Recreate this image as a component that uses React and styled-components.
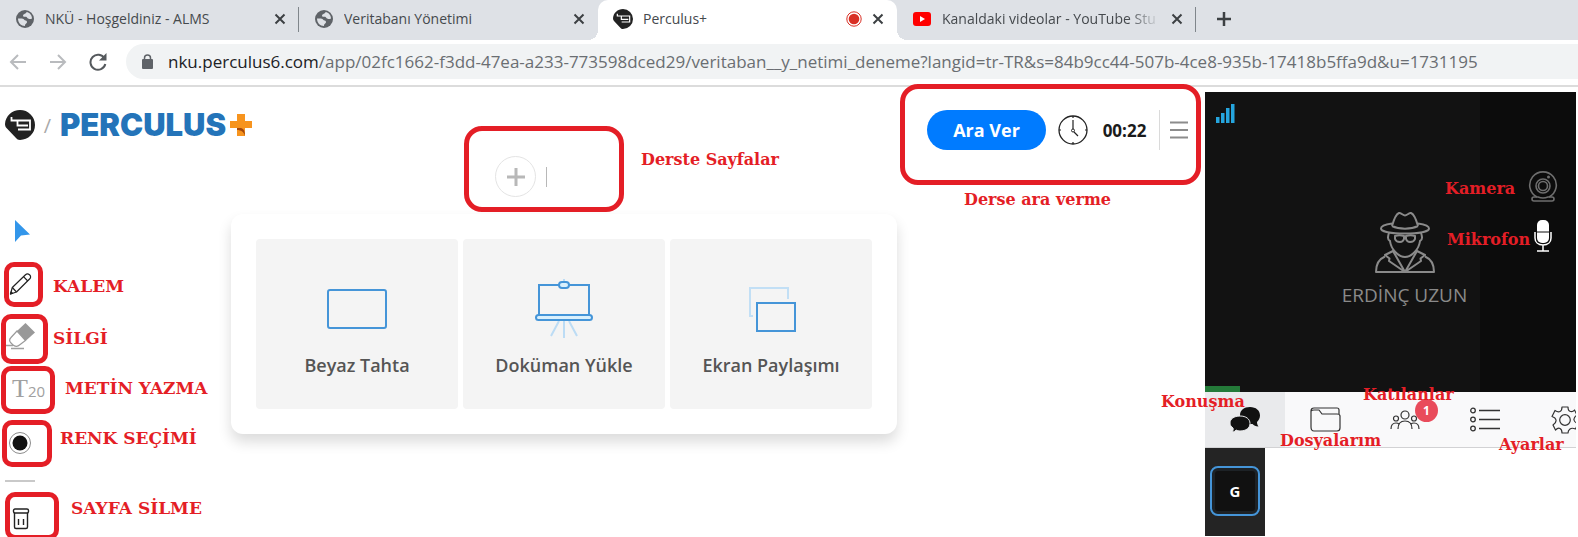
import React from "react";
import styled, { createGlobalStyle, css } from "styled-components";

const UI = `"Open Sans", "Noto Sans", sans-serif`;
const NOTE = `"DejaVu Serif", serif`;
const RED = "#e41e26";

const GlobalStyle = createGlobalStyle`
  * { box-sizing: border-box; }
  body { margin: 0; background: #fff; font-family: ${UI}; }
  button { margin: 0; padding: 0; border: 0; background: none; font: inherit; color: inherit; cursor: pointer; }
  svg { display: block; flex: none; }
`;

const Page = styled.div`
  display: flex;
  flex-direction: column;
  min-height: 100vh;
  overflow: hidden;
`;

/* Browser chrome */
const TabStrip = styled.div`
  display: flex;
  height: 40px;
  background: #dee1e6;
`;

const BrowserTab = styled.div`
  position: relative;
  flex: 0 1 299px;
  min-width: 0;
  display: flex;
  align-items: center;
  gap: 11px;
  padding: 0 13px 2px 16px;
  color: #45494d;
  font-size: 14px;
  ${(p) => p.$divider && css`
    &::after {
      content: "";
      position: absolute;
      right: 0;
      top: 7px;
      width: 1px;
      height: 25px;
      background: #80868b;
    }
  `}
  ${(p) => p.$active && css`
    padding-left: 15px;
    gap: 10px;
    background: #fff;
    border-radius: 10px 10px 0 0;
    &::before, &::after {
      content: "";
      position: absolute;
      bottom: 0;
      width: 10px;
      height: 10px;
    }
    &::before { left: -10px; background: radial-gradient(circle at 0 0, transparent 10px, #fff 10px); }
    &::after { right: -10px; background: radial-gradient(circle at 100% 0, transparent 10px, #fff 10px); }
  `}
`;

const TabTitle = styled.span`
  flex: 1;
  min-width: 0;
  overflow: hidden;
  white-space: nowrap;
  line-height: 24px;
  ${(p) => p.$fade && css`mask-image: linear-gradient(to left, transparent, #000 32px);`}
`;

const NewTab = styled.button`
  display: grid;
  place-items: center;
  width: 56px;
  padding-bottom: 2px;
`;

const AddressRow = styled.div`
  display: flex;
  align-items: center;
  height: 47px;
  padding: 0 0 2px 6px;
  border-bottom: 2px solid #dcdcdc;
`;

const NavButton = styled.button`
  flex: none;
  display: grid;
  place-items: center;
  width: 24px;
  height: 24px;
  margin-right: 16px;
  color: ${(p) => (p.$off ? "#b9bbbe" : "#55595d")};
`;

const AddressBar = styled.div`
  flex: 1;
  min-width: 0;
  display: flex;
  align-items: center;
  gap: 14px;
  height: 35px;
  padding-left: 15px;
  border-radius: 18px 0 0 18px;
  background: #f1f3f4;
  color: #6a6e72;
  font-size: 17px;
  white-space: nowrap;
  overflow: hidden;
  b { font-weight: 400; color: #202124; }
`;

/* Classroom */
const Classroom = styled.div`
  flex: 1;
  display: flex;
`;

const Main = styled.main`
  flex: 1;
  min-width: 0;
  display: grid;
  grid-template-columns: 231px minmax(0, 1fr) 308px;
  grid-template-rows: 127px auto;
`;

const Brand = styled.a`
  display: flex;
  align-items: center;
  align-self: start;
  height: 30px;
  margin-top: 23px;
  padding-left: 5px;
  text-decoration: none;
  white-space: nowrap;
`;

const Slash = styled.span`
  flex: none;
  width: 25px;
  text-align: center;
  color: #a9a9a9;
  font-size: 20px;
`;

const Wordmark = styled.span`
  flex: none;
  color: #2474b9;
  font-family: Inter, sans-serif;
  font-size: 31px;
  font-weight: 900;
  line-height: 30px;
  margin-right: 4px;
`;

const PageStrip = styled.div`
  position: relative;
  align-self: end;
  display: flex;
  align-items: center;
  gap: 10px;
  padding: 0 0 17px calc(50% - 69px);
`;

const AddPage = styled.button`
  display: grid;
  place-items: center;
  width: 41px;
  height: 41px;
  border: 1px solid #e4e4e4;
  border-radius: 50%;
`;

const Rule = styled.span`
  width: 1px;
  height: ${(p) => p.$length}px;
  background: ${(p) => p.$tone};
`;

const Controls = styled.div`
  position: relative;
  align-self: start;
  justify-self: end;
  display: flex;
  align-items: center;
  height: 40px;
  margin-top: 23px;
  padding-right: 17px;
`;

const BreakButton = styled.button`
  width: 119px;
  height: 40px;
  border-radius: 20px;
  background: #007bff;
  color: #fff;
  font-size: 18px;
  font-weight: 700;
  margin-right: 12px;
`;

const Elapsed = styled.time`
  width: 71px;
  padding-left: 2px;
  text-align: center;
  font-size: 17px;
  font-weight: 700;
  color: #1b1b1b;
`;

const MenuButton = styled.button`
  margin-left: 10px;
`;

const Rail = styled.div`
  display: flex;
  flex-direction: column;
  align-items: flex-start;
  gap: 21px;
  padding: 1px 0 2px 5px;
`;

const ToolSlot = styled.div`
  position: relative;
  height: 32px;
`;

const Tool = styled.button`
  display: flex;
  align-items: center;
  width: 40px;
  height: 32px;
`;

const RailRule = styled.div`
  width: 30px;
  height: 2px;
  background: #c9c9c9;
`;

const Starter = styled.section`
  align-self: start;
  display: grid;
  grid-template-columns: repeat(3, minmax(0, 1fr));
  gap: 5px;
  padding: 25px;
  border-radius: 12px;
  background: #fff;
  box-shadow: 0 8px 14px rgba(0, 0, 0, 0.14);
`;

const Choice = styled.button`
  display: flex;
  flex-direction: column;
  align-items: center;
  gap: 12px;
  padding: 40px 0 30px;
  border-radius: 4px;
  background: #f4f4f4;
  color: #555;
  font-size: 18px;
  font-weight: 600;
  line-height: 28px;
`;

/* Side panel */
const Side = styled.aside`
  position: relative;
  flex: none;
  width: 373px;
  padding: 5px 2px 0 0;
`;

const Camera = styled.div`
  position: relative;
  display: flex;
  flex-direction: column;
  align-items: center;
  height: 300px;
  padding: 120px 0 0 28px;
  background: linear-gradient(to left, #0c0c0c 96px, #121212 96px);
  color: #8a8a8a;
  font-size: 19px;
  line-height: 28px;
`;

const Speaker = styled.span`
  margin-top: 8px;
`;

const Signal = styled.div`
  position: absolute;
  left: 11px;
  top: 12px;
`;

const Level = styled.div`
  position: absolute;
  left: 0;
  bottom: 0;
  width: 35px;
  height: 6px;
  background: #247a39;
`;

const DeviceButtons = styled.div`
  position: absolute;
  right: 18px;
  top: 78px;
  display: flex;
  flex-direction: column;
  align-items: center;
  gap: 18px;
`;

const PanelTabs = styled.nav`
  display: flex;
  height: 56px;
  overflow: hidden;
  background: #f9f9fa;
  border-bottom: 1px solid #d2d2d4;
`;

const PanelTab = styled.button`
  position: relative;
  flex: none;
  display: grid;
  place-items: center;
  width: 80px;
  background: ${(p) => (p.$active ? "#e9eaec" : "none")};
`;

const Badge = styled.span`
  position: absolute;
  left: 50px;
  top: 7px;
  width: 23px;
  height: 23px;
  border-radius: 50%;
  background: #e94b5b;
  color: #fff;
  font-size: 12px;
  font-weight: 700;
  line-height: 23px;
`;

const People = styled.div`
  display: flex;
  justify-content: center;
  align-items: flex-start;
  width: 60px;
  height: 88px;
  padding-top: 18px;
  background: #242424;
`;

const Initial = styled.button`
  width: 50px;
  height: 50px;
  border: 2px solid #4595d8;
  border-radius: 8px;
  background: #111;
  box-shadow: inset 0 0 0 3px #1d2226;
  color: #fff;
  font-size: 15px;
  font-weight: 700;
`;

/* Red teaching notes laid over the interface */
const Frame = styled.span`
  position: absolute;
  z-index: 2;
  left: ${(p) => p.$x}px;
  top: ${(p) => p.$y}px;
  width: ${(p) => p.$w}px;
  height: ${(p) => p.$h}px;
  border: 5px solid ${RED};
  border-radius: ${(p) => p.$r || 10}px;
  pointer-events: none;
`;

const Note = styled.span`
  position: absolute;
  z-index: 3;
  left: ${(p) => p.$x}px;
  top: ${(p) => p.$y}px;
  color: ${RED};
  font-family: ${NOTE};
  font-size: ${(p) => (p.$caps ? 17 : 16)}px;
  font-weight: 700;
  line-height: ${(p) => (p.$caps ? 20 : 22)}px;
  white-space: nowrap;
  pointer-events: none;
`;

const StripMarks = styled.span`
  position: absolute;
  left: 50%;
  top: 0;
`;

/* Drawings */
const Globe = () => (
  <svg width="18" height="18" viewBox="0 0 18 18">
    <circle cx="9" cy="9" r="9" fill="#5f6368" />
    <path d="M2 8.500c2.500 0 5-.500 6 1s3 .500 3 2.500-2 1-2 4C5 16 2 13 2 8.500zM10.500 2c0 2-3.500 1.500-3.500 4 1 1.500 3 0 4 1.500s3 2 5 1C16 5 13.500 2.500 10.500 2z" fill="#dee1e6" />
  </svg>
);

const Close = () => (
  <svg width="12" height="12" viewBox="0 0 12 12" stroke="#3c4043" strokeWidth="2">
    <path d="M1.500 1.500l9 9M10.500 1.500l-9 9" />
  </svg>
);

const Mark = ({ size }) => (
  <svg width={size} height={size} viewBox="0 0 30 30">
    <path d="M15 0a15 15 0 0 1 0 30c-2 0-3-1-4-2L1.500 18C.500 17 0 15.500 0 14 .500 6 7 0 15 0z" fill="#222" />
    <path d="M6.500 7v3.500H25v9H13M12.500 11v4.500H23" fill="none" stroke="#fff" strokeWidth="1.800" />
  </svg>
);

const Recording = () => (
  <svg width="16" height="16" viewBox="0 0 16 16">
    <circle cx="8" cy="8" r="7.200" fill="none" stroke="#d93025" />
    <circle cx="8" cy="8" r="5.300" fill="#d93025" />
  </svg>
);

const Tube = () => (
  <svg width="18" height="14" viewBox="0 0 18 14">
    <rect width="18" height="14" rx="3" fill="#f00" />
    <path d="M7 4l5 3-5 3z" fill="#fff" />
  </svg>
);

const Arrow = ({ flip }) => (
  <svg width="18" height="18" viewBox="0 0 18 18" fill="none" stroke="currentColor" strokeWidth="2">
    <path d={flip ? "M1 9h15M9 2l7 7-7 7" : "M17 9H2M9 2L2 9l7 7"} />
  </svg>
);

const Reload = () => (
  <svg width="18" height="18" viewBox="0 0 18 18">
    <path d="M15.500 5.500A7.500 7.500 0 1 0 16.300 11" fill="none" stroke="currentColor" strokeWidth="2" />
    <path d="M17.500 0v7.500H10z" fill="currentColor" />
  </svg>
);

const Lock = () => (
  <svg width="13" height="16" viewBox="0 0 13 16">
    <rect x="1" y="5" width="11" height="10" rx="1" fill="#5f6368" />
    <path d="M3.500 6V4a3 3 0 0 1 6 0v2" fill="none" stroke="#5f6368" strokeWidth="1.500" />
  </svg>
);

const LogoPlus = () => (
  <svg width="22" height="22" viewBox="0 0 22 22">
    <path d="M7 0h8v7h7v7h-7v8H7v-8H0V7h7z" fill="#f7941e" />
    <path d="M7 14h3c3 0 5 2 5 8-1-4-4-6-8-6z" fill="#a4470b" />
  </svg>
);

const Clock = () => (
  <svg width="30" height="30" viewBox="0 0 30 30" fill="none" stroke="#222">
    <circle cx="15" cy="15" r="14" strokeWidth="1.300" />
    <circle cx="15" cy="15.500" r="1.500" />
    <path d="M15 5v9M16 17l4 4M15 1v2M15 27v2M1 15h2M27 15h2" strokeWidth="1.200" />
  </svg>
);

const Burger = () => (
  <svg width="18" height="18" viewBox="0 0 18 18" stroke="#8c8c8c" strokeWidth="2">
    <path d="M0 1.500h18M0 9h18M0 16.500h18" />
  </svg>
);

const Pointer = () => (
  <svg width="26" height="22" viewBox="0 0 26 22">
    <path d="M10 0l15 14.500-9 1L10 22z" fill="#3396ea" />
  </svg>
);

const Pencil = () => (
  <svg width="28" height="22" viewBox="0 0 28 22" fill="none" stroke="#222" strokeWidth="1.200" strokeLinejoin="round">
    <path d="M5.500 21l1.800-6.500L20.500 1.700c1.200-1 2.700-1 4 .100s1.500 2.700.300 4L11.500 19z" />
    <path d="M7.300 14.500l4.200 4.500M18.500 3.700l4.300 4.300" />
    <path d="M5.500 21l.600-2.200 1.500 1.500z" fill="#222" />
  </svg>
);

const Eraser = () => (
  <svg width="30" height="28" viewBox="0 0 30 28">
    <path d="M12 8L20.500 0l9.500 9.500-9.500 8.500z" fill="#999" />
    <path d="M12 8L6 14.500c-2 2-1.500 4 0 5.500l2 2c2 2 5 1.500 6.500 0l6-4.500z" fill="#fff" stroke="#999" strokeWidth="1.200" />
    <path d="M0 22.500h8M6 25.500h13" stroke="#a0a0a0" strokeWidth="1.300" />
  </svg>
);

const Swatch = () => (
  <svg width="26" height="24" viewBox="0 0 26 24">
    <circle cx="15" cy="12" r="10.500" fill="none" stroke="#8c8c8c" />
    <circle cx="15" cy="12" r="7.500" fill="#111" />
  </svg>
);

const Bin = () => (
  <svg width="25" height="22" viewBox="0 0 25 22" fill="none" stroke="#222" strokeWidth="1.400">
    <rect x="8.500" y="1" width="15" height="4" rx="1.500" />
    <path d="M9.500 5v14q0 1.500 1.500 1.500h10q1.500 0 1.500-1.500V5M13.500 11v6M18.500 11v6" />
  </svg>
);

const TextSize = styled.span`
  padding-left: 7px;
  color: #a0a0a0;
  font-family: "Liberation Serif", serif;
  font-size: 26px;
  line-height: 32px;
  small { font-family: ${UI}; font-size: 15px; }
`;

const Board = () => (
  <svg width="60" height="60" viewBox="0 0 60 60">
    <rect x="1" y="11" width="58" height="38" rx="2" fill="none" stroke="#4595d8" strokeWidth="2" />
  </svg>
);

const Easel = () => (
  <svg width="60" height="60" viewBox="0 0 60 60" fill="none" stroke="#4595d8" strokeWidth="2">
    <path d="M25 42l-8 15M30 42v17M35 42l8 15M30 0v3" stroke="#bcdcf5" />
    <rect x="5" y="6" width="50" height="31" />
    <rect x="2" y="36" width="56" height="5" rx="2.500" fill="#d9f0fd" />
    <rect x="25" y="3" width="10" height="6" rx="3" fill="#d9f0fd" />
  </svg>
);

const Screens = () => (
  <svg width="60" height="60" viewBox="0 0 60 60" fill="none" strokeWidth="2">
    <path d="M12 37H9V9h38v11" stroke="#c2dff5" />
    <rect x="16" y="24" width="38" height="28" stroke="#4595d8" />
  </svg>
);

const Bars = () => (
  <svg width="19" height="19" viewBox="0 0 19 19" fill="#25a5de">
    <path d="M0 13h3.500v6H0zM5 9h3.500v10H5zM10 4h3.500v15H10zM15 0h3.500v19H15z" />
  </svg>
);

const Agent = () => (
  <svg width="60" height="61" viewBox="0 0 60 61" fill="none" stroke="#8a8a8a" strokeWidth="2" strokeLinejoin="round">
    <path d="M17 14c2-7 4-12 7-13 2-.500 4 2.500 6 2.500S34 .500 36 1c3 1 5 6 7 13M17 14c7 3.500 19 3.500 26 0M17 11.500C10 12.500 6 14.500 6 16.500c0 3 10 5 24 5s24-2 24-5c0-2-4-4-11-5" />
    <path d="M14 21c-2 5-1 7 1 8 1 8 8 16 15 16s14-8 15-16c2-1 3-3 1-8" />
    <path d="M20 24q4.500-1.500 9 0v3q-1 3-4 3-4 0-5-3zM31 24q4.500-1.500 9 0v3q-1 3-5 3-3 0-4-3z" />
    <path d="M10 44.500C4 47 1 53 1 60h58c0-7-3-13-9-15.500" />
    <path d="M18 39l-8 4 4.500 3.500L14 49l16 11-12-21zM42 39l8 4-4.500 3.500.500 2.500-16 11z" />
  </svg>
);

const Webcam = () => (
  <svg width="30" height="32" viewBox="0 0 30 32" fill="none" stroke="#6e6e6e" strokeWidth="1.600">
    <path d="M9 27a13.300 13.300 0 1 1 12 0" />
    <circle cx="15" cy="16" r="7" />
    <circle cx="15" cy="16" r="4.500" />
    <circle cx="20.500" cy="7" r=".7" />
    <path d="M6 27h4q5 2 10 0h4q2 0 2 2t-2 2H6q-2 0-2-2t2-2z" />
  </svg>
);

const Microphone = () => (
  <svg width="18" height="32" viewBox="0 0 18 32">
    <rect x="3" y="0" width="12" height="23" rx="5" fill="#fff" />
    <path d="M3 12h12" stroke="#0c0c0c" />
    <path d="M1 12v6c0 4 3 7 8 7s8-3 8-7v-6M9 25v6M3 31h12" fill="none" stroke="#fff" strokeWidth="1.500" />
  </svg>
);

const Chat = () => (
  <svg width="31" height="26" viewBox="0 0 31 26">
    <path d="M20 0c6 0 10 3.500 10 8.500 0 3-1.500 5-3 6.500 0 2 .500 3 1.500 4.500-3 0-4.500-1-6-2.500C14 18 10 14 10 8.500S14 0 20 0z" fill="#111" />
    <path d="M10 9c6 0 10 3 10 7.500S16 24 10 24c-1.500 0-3-.500-4-1-1 1.500-2.500 2-4 2 1-1 1.500-2.500 1-4-2-1.500-3-3-3-5C0 12 4 9 10 9z" fill="#111" stroke="#e9eaec" />
  </svg>
);

const Folder = () => (
  <svg width="31" height="25" viewBox="0 0 31 25" fill="none" stroke="#333" strokeWidth="1.200">
    <path d="M1 20V4q0-3 3-3h23q2 0 2 2v4M1 4q1-1 3-1h5l3 4h15q3 0 3 2v12q0 3-3 3H4q-3 0-3-4z" />
  </svg>
);

const Group = () => (
  <svg width="30" height="20" viewBox="0 0 30 20" fill="none" stroke="#333" strokeWidth="1.200">
    <circle cx="15" cy="5" r="4" />
    <circle cx="6" cy="8.500" r="2.500" />
    <circle cx="24" cy="8.500" r="2.500" />
    <path d="M8 19c0-5 2-8 7-8s7 3 7 8M1 19c0-4 2-6 5-6 1 0 2 0 3 1M29 19c0-4-2-6-5-6-1 0-2 0-3 1" />
  </svg>
);

const List = () => (
  <svg width="30" height="25" viewBox="0 0 30 25" fill="none" stroke="#333" strokeWidth="1.300">
    <circle cx="3" cy="3.500" r="2.300" />
    <circle cx="3" cy="12.500" r="2.300" />
    <circle cx="3" cy="21.500" r="2.300" />
    <path d="M9 3.500h21M9 12.500h21M9 21.500h21" />
  </svg>
);

const Gear = () => (
  <svg width="28" height="28" viewBox="0 0 28 28" fill="none" stroke="#333" strokeWidth="1.200" strokeLinejoin="round">
    <path d="M11 1h6q0 4 2.500 4.500T23.500 4l2.500 5q-3.500 2.500-3 5t4 3.500l-2.500 5.500q-3.500-1.500-5.500 0T17 27h-6q0-3.500-2-4.500T4.500 24L2 19q3.500-2.500 3-5T1 10.500L4 4.500q3 2 5 1T11 1z" />
    <circle cx="14" cy="14" r="5.300" />
  </svg>
);

const browserTabs = [
  { title: "NKÜ - Hoşgeldiniz - ALMS", icon: <Globe />, divider: true },
  { title: "Veritabanı Yönetimi", icon: <Globe /> },
  { title: "Perculus+", icon: <Mark size={20} />, active: true },
  { title: "Kanaldaki videolar - YouTube Stu", icon: <Tube />, divider: true, fade: true },
];

const tools = [
  { name: "Seçim", icon: <Pointer /> },
  { name: "Kalem", icon: <Pencil />, note: "KALEM", frame: [-1, -6, 39, 45], at: [48, 8] },
  { name: "Silgi", icon: <Eraser />, note: "SİLGİ", frame: [-4, -7, 47, 50], at: [48, 7] },
  { name: "Metin", icon: <TextSize>T<small>20</small></TextSize>, note: "METİN YAZMA", frame: [-4, -8, 54, 48], at: [60, 4] },
  { name: "Renk", icon: <Swatch />, note: "RENK SEÇİMİ", frame: [-3, -7, 50, 47], at: [55, 1] },
];

const choices = [
  { label: "Beyaz Tahta", icon: <Board /> },
  { label: "Doküman Yükle", icon: <Easel /> },
  { label: "Ekran Paylaşımı", icon: <Screens /> },
];

const panelTabs = [
  { name: "Konuşma", icon: <Chat />, active: true },
  { name: "Dosyalarım", icon: <Folder /> },
  { name: "Katılanlar", icon: <Group />, badge: 1 },
  { name: "Liste", icon: <List /> },
  { name: "Ayarlar", icon: <Gear /> },
];

const sideNotes = [
  ["Kamera", 240, 91],
  ["Mikrofon", 242, 142],
  ["Konuşma", -44, 304],
  ["Katılanlar", 158, 297],
  ["Dosyalarım", 75, 343],
  ["Ayarlar", 294, 347],
];

export default function App() {
  return (
    <Page>
      <GlobalStyle />
      <TabStrip>
        {browserTabs.map((t) => (
          <BrowserTab key={t.title} $active={t.active} $divider={t.divider}>
            {t.icon}
            <TabTitle $fade={t.fade}>{t.title}</TabTitle>
            {t.active && <Recording />}
            <button aria-label="Sekmeyi kapat"><Close /></button>
          </BrowserTab>
        ))}
        <NewTab aria-label="Yeni sekme">
          <svg width="16" height="16" viewBox="0 0 16 16" stroke="#3c4043" strokeWidth="2.500">
            <path d="M8 1v14M1 8h14" />
          </svg>
        </NewTab>
      </TabStrip>
      <AddressRow>
        <NavButton $off aria-label="Geri"><Arrow /></NavButton>
        <NavButton $off aria-label="İleri"><Arrow flip /></NavButton>
        <NavButton aria-label="Yenile"><Reload /></NavButton>
        <AddressBar>
          <Lock />
          <span role="textbox" aria-label="Adres" tabIndex={0}>
            <b>nku.perculus6.com</b>/app/02fc1662-f3dd-47ea-a233-773598dced29/veritaban__y_netimi_deneme?langid=tr-TR&amp;s=84b9cc44-507b-4ce8-935b-17418b5ffa9d&amp;u=1731195
          </span>
        </AddressBar>
      </AddressRow>

      <Classroom>
        <Main>
          <Brand href="#" aria-label="Perculus+">
            <Mark size={30} />
            <Slash>/</Slash>
            <Wordmark>PERCULUS</Wordmark>
            <LogoPlus />
          </Brand>

          <PageStrip>
            <AddPage aria-label="Sayfa ekle">
              <svg width="18" height="18" viewBox="0 0 18 18" stroke="#b8b8b8" strokeWidth="3">
                <path d="M9 0v18M0 9h18" />
              </svg>
            </AddPage>
            <Rule $length={20} $tone="#b8b8b8" />
            <StripMarks>
              <Frame $x={-100} $y={-30} $w={160} $h={86} $r={18} />
              <Note $x={77} $y={-7}>Derste Sayfalar</Note>
            </StripMarks>
          </PageStrip>

          <Controls>
            <BreakButton>Ara Ver</BreakButton>
            <Clock />
            <Elapsed>00:22</Elapsed>
            <Rule $length={40} $tone="#dadada" />
            <MenuButton aria-label="Menü"><Burger /></MenuButton>
            <Frame $x={-27} $y={-26} $w={301} $h={101} $r={18} />
            <Note $x={37} $y={79}>Derse ara verme</Note>
          </Controls>

          <Rail>
            {tools.map((t) => (
              <ToolSlot key={t.name}>
                <Tool aria-label={t.name}>{t.icon}</Tool>
                {t.note && (
                  <>
                    <Frame $x={t.frame[0]} $y={t.frame[1]} $w={t.frame[2]} $h={t.frame[3]} />
                    <Note $caps $x={t.at[0]} $y={t.at[1]}>{t.note}</Note>
                  </>
                )}
              </ToolSlot>
            ))}
            <RailRule />
            <ToolSlot>
              <Tool aria-label="Sayfayı sil"><Bin /></Tool>
              <Frame $x={0} $y={-11} $w={54} $h={48} />
              <Note $caps $x={66} $y={-5}>SAYFA SİLME</Note>
            </ToolSlot>
          </Rail>

          <Starter>
            {choices.map((c) => (
              <Choice key={c.label}>
                {c.icon}
                {c.label}
              </Choice>
            ))}
          </Starter>
        </Main>

        <Side>
          <Camera>
            <Signal><Bars /></Signal>
            <Agent />
            <Speaker>ERDİNÇ UZUN</Speaker>
            <DeviceButtons>
              <button aria-label="Kamera"><Webcam /></button>
              <button aria-label="Mikrofon"><Microphone /></button>
            </DeviceButtons>
            <Level />
          </Camera>
          <PanelTabs>
            {panelTabs.map((t) => (
              <PanelTab key={t.name} $active={t.active} aria-label={t.name}>
                {t.icon}
                {t.badge && <Badge>{t.badge}</Badge>}
              </PanelTab>
            ))}
          </PanelTabs>
          <People>
            <Initial>G</Initial>
          </People>
          {sideNotes.map(([text, x, y]) => (
            <Note key={text} $x={x} $y={y}>{text}</Note>
          ))}
        </Side>
      </Classroom>
    </Page>
  );
}
